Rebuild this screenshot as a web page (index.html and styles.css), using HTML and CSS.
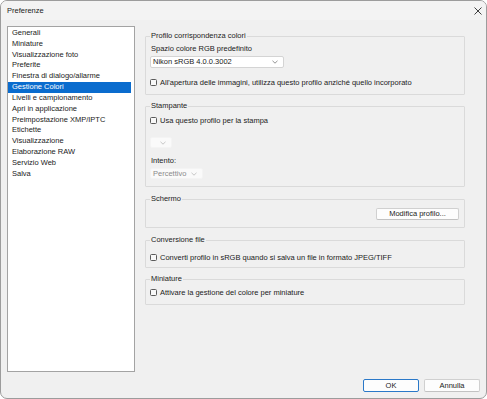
FILE: index.html
```html
<!DOCTYPE html>
<html lang="it">

<head>
    <meta charset="UTF-8">
    <meta name="viewport" content="width=device-width, initial-scale=1.0">
    <title>Preferenze</title>
    <link rel="stylesheet" href="styles.css">
</head>

<body>
    <div class="window">
        <div class="titlebar">
            <span class="title">Preferenze</span>
            <svg class="close" width="8" height="8" viewBox="0 0 8 8">
                <path d="M0.5 0.5L7.5 7.5M7.5 0.5L0.5 7.5" stroke="#2b2b2b" stroke-width="0.9" fill="none" />
            </svg>
        </div>

        <div class="main">
            <!-- elenco delle categorie -->
            <ul class="nav">
                <li>Generali</li>
                <li>Miniature</li>
                <li>Visualizzazione foto</li>
                <li>Preferite</li>
                <li>Finestra di dialogo/allarme</li>
                <li class="active">Gestione Colori</li>
                <li>Livelli e campionamento</li>
                <li>Apri in applicazione</li>
                <li>Preimpostazione XMP/IPTC</li>
                <li>Etichette</li>
                <li>Visualizzazione</li>
                <li>Elaborazione RAW</li>
                <li>Servizio Web</li>
                <li>Salva</li>
            </ul>

            <div class="panel">
                <fieldset class="group g-profile">
                    <legend>Profilo corrispondenza colori</legend>
                    <div class="field-label">Spazio colore RGB predefinito</div>
                    <div class="combo combo-rgb">
                        <span>Nikon sRGB 4.0.0.3002</span>
                        <svg width="6" height="4" viewBox="0 0 6 4"><path d="M0.5 0.8L3 3.2L5.5 0.8" stroke="#666" stroke-width="0.7" fill="none" /></svg>
                    </div>
                    <label class="check check-open"><input type="checkbox">All'apertura delle immagini, utilizza questo profilo anziché quello incorporato</label>
                </fieldset>

                <fieldset class="group g-printer">
                    <legend>Stampante</legend>
                    <label class="check check-print"><input type="checkbox">Usa questo profilo per la stampa</label>
                    <div class="combo combo-printer disabled">
                        <span></span>
                        <svg width="6" height="4" viewBox="0 0 6 4"><path d="M0.5 0.8L3 3.2L5.5 0.8" stroke="#b0b0b0" stroke-width="0.7" fill="none" /></svg>
                    </div>
                    <div class="field-label label-intent">Intento:</div>
                    <div class="combo combo-intent disabled">
                        <span>Percettivo</span>
                        <svg width="6" height="4" viewBox="0 0 6 4"><path d="M0.5 0.8L3 3.2L5.5 0.8" stroke="#b0b0b0" stroke-width="0.7" fill="none" /></svg>
                    </div>
                </fieldset>

                <fieldset class="group g-screen">
                    <legend>Schermo</legend>
                    <div class="row-right">
                        <button type="button" class="btn btn-edit">Modifica profilo...</button>
                    </div>
                </fieldset>

                <fieldset class="group g-convert">
                    <legend>Conversione file</legend>
                    <label class="check check-convert"><input type="checkbox">Converti profilo in sRGB quando si salva un file in formato JPEG/TIFF</label>
                </fieldset>

                <fieldset class="group g-thumb">
                    <legend>Miniature</legend>
                    <label class="check check-thumb"><input type="checkbox">Attivare la gestione del colore per miniature</label>
                </fieldset>
            </div>
        </div>

        <div class="footer">
            <button type="button" class="btn btn-default">OK</button>
            <button type="button" class="btn">Annulla</button>
        </div>
    </div>
</body>

</html>
```

FILE: styles.css
```css
* {
    padding: 0;
    margin: 0;
    box-sizing: border-box;
}

html,
body {
    width: 100%;
    height: 100%;
    background: #FFFFFF;
}

body {
    font-family: "Liberation Sans", Arial, sans-serif;
    font-size: 7.5px;
    color: #1B1B1B;
}

.window {
    width: 487px;
    height: 399px;
    border: 1px solid #9C9C9C;
    border-radius: 7px;
    background: #F0F0F0;
    overflow: hidden;
    display: flex;
    flex-direction: column;
}

.titlebar {
    height: 19px;
    background: #F3F3F3;
    display: flex;
    align-items: center;
    justify-content: space-between;
    padding: 0 4px 0 6px;
}

.title {
    line-height: 10px;
}

.main {
    display: flex;
    padding: 6px 6px 0 6px;
}

/* elenco a sinistra */
.nav {
    list-style: none;
    width: 128px;
    height: 346px;
    background: #FFFFFF;
    border: 1px solid #A3A3A3;
    padding-top: 1px;
}

.nav li {
    height: 10.83px;
    line-height: 10.83px;
    padding-left: 4px;
    margin-right: 3px;
    white-space: nowrap;
}

.nav li.active {
    background: #0A6CCE;
    color: #FFFFFF;
}

.panel {
    width: 320px;
    margin-left: 10px;
    display: flex;
    flex-direction: column;
}

.group {
    border: 1px solid #DADADA;
    border-radius: 1px;
    padding: 0 5px 0 4px;
    min-width: 0;
}

.group legend {
    padding: 0 1px;
    line-height: 10px;
    color: #222222;
}

.g-profile {
    margin-top: 5px;
    padding-bottom: 7px;
}

.g-printer {
    margin-top: 6px;
    padding-bottom: 7px;
}

.g-screen {
    margin-top: 7px;
    padding-bottom: 7px;
}

.g-convert {
    margin-top: 7px;
    padding-bottom: 5px;
}

.g-thumb {
    margin-top: 6px;
    padding-bottom: 7px;
}

.field-label {
    line-height: 10px;
    margin-top: 3px;
    padding-left: 1px;
}

.label-intent {
    margin-top: 8px;
}

.combo {
    display: flex;
    align-items: center;
    justify-content: space-between;
    background: #FFFFFF;
    border: 1px solid #D4D4D4;
    border-radius: 2px;
    padding: 0 5px 0 2px;
    line-height: 10px;
}

.combo-rgb {
    width: 134px;
    height: 12px;
    margin-top: 2px;
}

.combo.disabled {
    background: #FAFAFA;
    border-color: #F4F4F4;
    color: #8A8A8A;
}

.combo-printer {
    width: 22px;
    height: 11px;
    margin-top: 12px;
}

.combo-intent {
    width: 53px;
    height: 11px;
    margin-top: 2px;
}

.check {
    display: flex;
    align-items: center;
    height: 10px;
    white-space: nowrap;
}

.check input {
    appearance: none;
    width: 7px;
    height: 7px;
    border: 1px solid #5A5A5A;
    border-radius: 1.5px;
    background: #F8F8F8;
    margin-right: 3px;
    flex-shrink: 0;
}

.check-open {
    margin-top: 9px;
}

.check-print {
    margin-top: 4px;
}

.check-convert {
    margin-top: 7px;
}

.check-thumb {
    margin-top: 3px;
}

.row-right {
    display: flex;
    justify-content: flex-end;
    margin-top: 4px;
}

.btn {
    font-family: inherit;
    font-size: 7.5px;
    color: #1B1B1B;
    background: #FDFDFD;
    border: 1px solid #D0D0D0;
    border-bottom-color: #C2C2C2;
    border-radius: 2px;
    line-height: 10px;
}

.btn-edit {
    width: 83px;
    height: 12px;
}

.footer {
    display: flex;
    justify-content: flex-end;
    gap: 5px;
    padding: 7px 6px 0 0;
}

.footer .btn {
    width: 56px;
    height: 13px;
}

.btn-default {
    border-color: #2A78C8;
}
```
